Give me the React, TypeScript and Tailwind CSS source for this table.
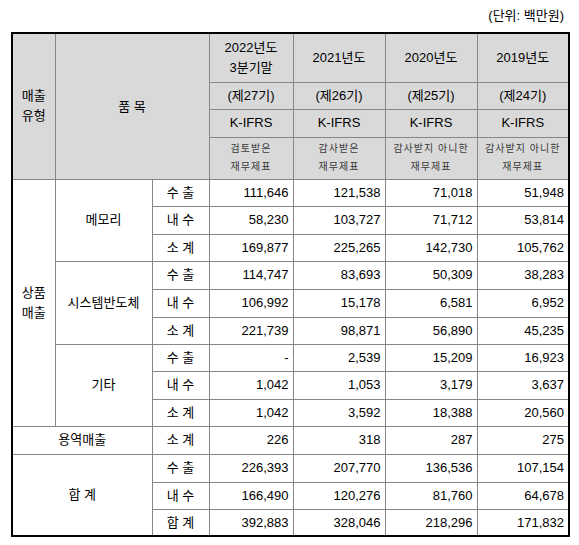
const YEARS = [
	{ year: ['2022년도', '3분기말'], term: '(제27기)', note: ['검토받은', '재무제표'] },
	{ year: ['2021년도'], term: '(제26기)', note: ['감사받은', '재무제표'] },
	{ year: ['2020년도'], term: '(제25기)', note: ['감사받지 아니한', '재무제표'] },
	{ year: ['2019년도'], term: '(제24기)', note: ['감사받지 아니한', '재무제표'] },
];

const PRODUCTS = [
	{
		name: '메모리',
		rows: [
			{ label: '수 출', v: ['111,646', '121,538', '71,018', '51,948'], h: 'h-[27px]' },
			{ label: '내 수', v: ['58,230', '103,727', '71,712', '53,814'], h: 'h-[28px]' },
			{ label: '소 계', v: ['169,877', '225,265', '142,730', '105,762'], h: 'h-[27px]' },
		],
	},
	{
		name: '시스템반도체',
		rows: [
			{ label: '수 출', v: ['114,747', '83,693', '50,309', '38,283'], h: 'h-[28px]' },
			{ label: '내 수', v: ['106,992', '15,178', '6,581', '6,952'], h: 'h-[28px]' },
			{ label: '소 계', v: ['221,739', '98,871', '56,890', '45,235'], h: 'h-[27px]' },
		],
	},
	{
		name: '기타',
		rows: [
			{ label: '수 출', v: ['-', '2,539', '15,209', '16,923'], h: 'h-[27px]' },
			{ label: '내 수', v: ['1,042', '1,053', '3,179', '3,637'], h: 'h-[28px]' },
			{ label: '소 계', v: ['1,042', '3,592', '18,388', '20,560'], h: 'h-[27px]' },
		],
	},
];

const TOTALS = [
	{ label: '수 출', v: ['226,393', '207,770', '136,536', '107,154'], h: 'h-[28px]' },
	{ label: '내 수', v: ['166,490', '120,276', '81,760', '64,678'], h: 'h-[27px]' },
	{ label: '합 계', v: ['392,883', '328,046', '218,296', '171,832'], h: 'h-[27px]' },
];

const cell = 'border border-[#878787] p-0';
const num = `${cell} text-right pr-[4px]`;
const head = `${cell} bg-[#d9d9d9] text-center`;

function Values({ v }: { v: string[] }) {
	return (
		<>
			{v.map((x, i) => (
				<td key={i} className={num}>
					{x}
				</td>
			))}
		</>
	);
}

export default function App() {
	return (
		<div className="bg-white w-[579px] h-[545px] px-[11px] text-black text-[13px] font-['Liberation_Sans','Noto_Sans_CJK_KR',sans-serif]">
			<div className="h-[32px] flex items-center justify-end pr-[4px]">(단위: 백만원)</div>
			<table className="table-fixed w-[557px] border-collapse border-2 border-black">
				<colgroup>
					<col className="w-[43px]" />
					<col className="w-[97px]" />
					<col className="w-[57px]" />
					<col className="w-[84px]" />
					<col className="w-[92px]" />
					<col className="w-[92px]" />
					<col className="w-[92px]" />
				</colgroup>
				<thead>
					<tr className="h-[49px]">
						<th rowSpan={4} className={`${head} font-normal leading-[20px]`}>
							매출
							<br />
							유형
						</th>
						<th rowSpan={4} colSpan={2} className={`${head} font-normal`}>
							품 목
						</th>
						{YEARS.map((y) => (
							<th key={y.term} className={`${head} font-normal leading-[20px]`}>
								{y.year.map((l) => (
									<div key={l}>{l}</div>
								))}
							</th>
						))}
					</tr>
					<tr className="h-[27px]">
						{YEARS.map((y) => (
							<th key={y.term} className={`${head} font-normal`}>
								{y.term}
							</th>
						))}
					</tr>
					<tr className="h-[28px]">
						{YEARS.map((y) => (
							<th key={y.term} className={`${head} font-normal`}>
								K-IFRS
							</th>
						))}
					</tr>
					<tr className="h-[42px]">
						{YEARS.map((y) => (
							<th
								key={y.term}
								className={`${head} font-normal text-[10px] leading-[18px] tracking-[1px] text-[#3a3a3a] whitespace-nowrap`}
							>
								{y.note.map((l) => (
									<div key={l}>{l}</div>
								))}
							</th>
						))}
					</tr>
				</thead>
				<tbody>
					{PRODUCTS.map((p, pi) =>
						p.rows.map((r, ri) => (
							<tr key={`${p.name}-${r.label}`} className={r.h}>
								{pi === 0 && ri === 0 && (
									<td rowSpan={9} className={`${cell} text-center leading-[20px]`}>
										상품
										<br />
										매출
									</td>
								)}
								{ri === 0 && (
									<td rowSpan={3} className={`${cell} text-center`}>
										{p.name}
									</td>
								)}
								<td className={`${cell} text-center`}>{r.label}</td>
								<Values v={r.v} />
							</tr>
						)),
					)}
					<tr className="h-[28px]">
						<td colSpan={2} className={`${cell} text-center`}>
							용역매출
						</td>
						<td className={`${cell} text-center`}>소 계</td>
						<Values v={['226', '318', '287', '275']} />
					</tr>
					{TOTALS.map((r, ri) => (
						<tr key={r.label} className={r.h}>
							{ri === 0 && (
								<td rowSpan={3} colSpan={2} className={`${cell} text-center`}>
									합 계
								</td>
							)}
							<td className={`${cell} text-center`}>{r.label}</td>
							<Values v={r.v} />
						</tr>
					))}
				</tbody>
			</table>
		</div>
	);
}
